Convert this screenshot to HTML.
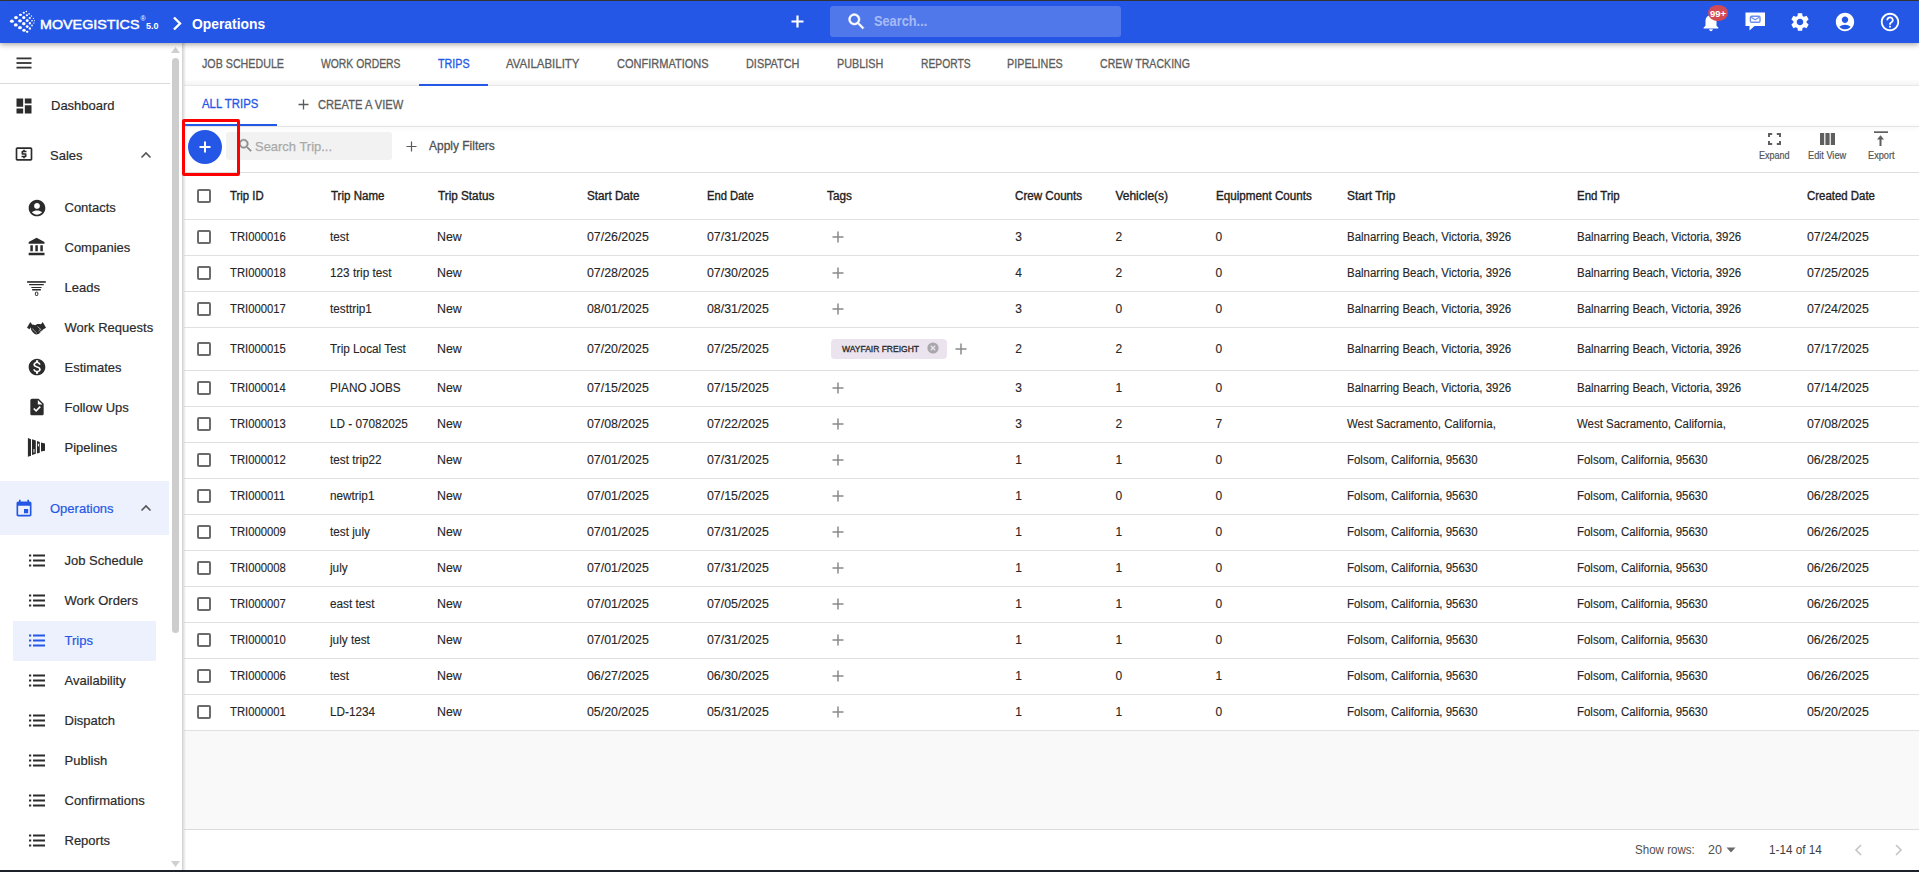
<!DOCTYPE html>
<html><head><meta charset="utf-8"><title>Trips - Operations</title>
<style>
html,body{margin:0;padding:0;width:1919px;height:872px;overflow:hidden;background:#fff;}
body{position:relative;font-family:"Liberation Sans",sans-serif;}
.t{position:absolute;white-space:nowrap;line-height:1;}
.r{position:absolute;display:block;}
</style></head><body>
<div class="r" style="left:0px;top:0px;width:1919px;height:872px;background:#ffffff;"></div>
<div class="r" style="left:184px;top:731px;width:1735px;height:98px;background:#f9f9f9;"></div>
<div class="r" style="left:184px;top:829px;width:1735px;height:1px;background:#dcdcdc;"></div>
<div class="r" style="left:184px;top:79px;width:1735px;height:6px;background:linear-gradient(to bottom, rgba(0,0,0,0), rgba(0,0,0,0.045));"></div>
<div class="r" style="left:184px;top:85px;width:1735px;height:1px;background:#e8e8e8;"></div>
<div class="t" style="left:202.00px;top:58px;font-size:12.5px;color:#5c5c5c;-webkit-text-stroke:0.3px #5c5c5c;transform:scaleX(0.8553);transform-origin:0 0;">JOB SCHEDULE</div>
<div class="t" style="left:320.80px;top:58px;font-size:12.5px;color:#5c5c5c;-webkit-text-stroke:0.3px #5c5c5c;transform:scaleX(0.8297);transform-origin:0 0;">WORK ORDERS</div>
<div class="t" style="left:437.50px;top:58px;font-size:12.5px;color:#2557e6;-webkit-text-stroke:0.3px #2557e6;transform:scaleX(0.8611);transform-origin:0 0;">TRIPS</div>
<div class="t" style="left:506.20px;top:58px;font-size:12.5px;color:#5c5c5c;-webkit-text-stroke:0.3px #5c5c5c;transform:scaleX(0.9173);transform-origin:0 0;">AVAILABILITY</div>
<div class="t" style="left:616.70px;top:58px;font-size:12.5px;color:#5c5c5c;-webkit-text-stroke:0.3px #5c5c5c;transform:scaleX(0.8813);transform-origin:0 0;">CONFIRMATIONS</div>
<div class="t" style="left:745.80px;top:58px;font-size:12.5px;color:#5c5c5c;-webkit-text-stroke:0.3px #5c5c5c;transform:scaleX(0.8701);transform-origin:0 0;">DISPATCH</div>
<div class="t" style="left:836.70px;top:58px;font-size:12.5px;color:#5c5c5c;-webkit-text-stroke:0.3px #5c5c5c;transform:scaleX(0.8654);transform-origin:0 0;">PUBLISH</div>
<div class="t" style="left:920.60px;top:58px;font-size:12.5px;color:#5c5c5c;-webkit-text-stroke:0.3px #5c5c5c;transform:scaleX(0.8258);transform-origin:0 0;">REPORTS</div>
<div class="t" style="left:1007.30px;top:58px;font-size:12.5px;color:#5c5c5c;-webkit-text-stroke:0.3px #5c5c5c;transform:scaleX(0.8634);transform-origin:0 0;">PIPELINES</div>
<div class="t" style="left:1100.30px;top:58px;font-size:12.5px;color:#5c5c5c;-webkit-text-stroke:0.3px #5c5c5c;transform:scaleX(0.8491);transform-origin:0 0;">CREW TRACKING</div>
<div class="r" style="left:419px;top:84px;width:69px;height:2px;background:#2557e6;"></div>
<div class="r" style="left:184px;top:126px;width:1735px;height:1px;background:#e4e4e4;box-shadow:0 1px 4px rgba(0,0,0,0.10)"></div>
<div class="t" style="left:202.00px;top:98px;font-size:12.5px;color:#2557e6;-webkit-text-stroke:0.3px #2557e6;transform:scaleX(0.9108);transform-origin:0 0;">ALL TRIPS</div>
<div class="t" style="left:318.00px;top:99px;font-size:12.5px;color:#5c5c5c;-webkit-text-stroke:0.3px #5c5c5c;transform:scaleX(0.8920);transform-origin:0 0;">CREATE A VIEW</div>
<svg class="r" style="left:298px;top:99px;" width="11" height="11" viewBox="0 0 11 11"><path d="M5.5 0.5v10M0.5 5.5h10" stroke="#5a5a5a" stroke-width="1.3"/></svg>
<div class="r" style="left:184px;top:124px;width:93px;height:2px;background:#2557e6;"></div>
<div class="r" style="left:184px;top:172px;width:1735px;height:1px;background:#dedede;"></div>
<div class="r" style="left:188px;top:130px;width:34px;height:34px;background:#2557e6;border-radius:50%"></div>
<svg class="r" style="left:197px;top:139px;" width="16" height="16" viewBox="0 0 16 16"><path d="M8 2.5v11M2.5 8h11" stroke="#fff" stroke-width="2"/></svg>
<div class="r" style="left:226px;top:132px;width:166px;height:28px;background:#f2f2f2;border-radius:3px"></div>
<svg class="r" style="left:237.3px;top:136.8px;" width="17" height="17" viewBox="0 0 24 24"><path fill="#8e8e8e" stroke="#8e8e8e" stroke-width="0.7" d="M15.5 14h-.79l-.28-.27C15.41 12.59 16 11.11 16 9.5 16 5.91 13.09 3 9.5 3S3 5.91 3 9.5 5.91 16 9.5 16c1.61 0 3.09-.59 4.23-1.57l.27.28v.79l5 4.99L20.49 19l-4.99-5zm-6 0C7.01 14 5 11.99 5 9.5S7.01 5 9.5 5 14 7.01 14 9.5 11.99 14 9.5 14z"/></svg>
<div class="t" style="left:255.00px;top:140px;font-size:13.5px;color:#a9a9a9;-webkit-text-stroke:0.25px #a9a9a9;transform:scaleX(0.9594);transform-origin:0 0;">Search Trip...</div>
<svg class="r" style="left:406px;top:141px;" width="11" height="11" viewBox="0 0 11 11"><path d="M5.5 0.5v10M0.5 5.5h10" stroke="#5a5a5a" stroke-width="1.2"/></svg>
<div class="t" style="left:428.90px;top:139px;font-size:13px;color:#505050;-webkit-text-stroke:0.3px #505050;transform:scaleX(0.9203);transform-origin:0 0;">Apply Filters</div>
<div class="r" style="left:182px;top:119px;width:58px;height:57px;background:transparent;border:3px solid #ff0000;box-sizing:border-box;border-radius:2px;z-index:10"></div>
<svg class="r" style="left:1760px;top:125px" width="140" height="26" viewBox="1760 125 140 26"><g fill="none" stroke="#5f5f5f" stroke-width="2"><path d="M1769 137v-3h3.2M1776.8 134h3.2v3M1780 141v3h-3.2M1772.2 144h-3.2v-3"/></g><g fill="#5f5f5f"><rect x="1820" y="133" width="4.2" height="12"/><rect x="1825.4" y="133" width="4.2" height="12"/><rect x="1830.8" y="133" width="4.2" height="12"/><rect x="1874" y="131.3" width="14" height="1.7"/><path d="M1877 139.4l3.5-4.2 3.5 4.2h-2.5v6.6h-2v-6.6z"/></g></svg>
<div class="t" style="left:1758.70px;top:151px;font-size:10px;color:#555;-webkit-text-stroke:0.2px #555;transform:scaleX(0.9027);transform-origin:0 0;">Expand</div>
<div class="t" style="left:1808.30px;top:151px;font-size:10px;color:#555;-webkit-text-stroke:0.2px #555;transform:scaleX(0.9194);transform-origin:0 0;">Edit View</div>
<div class="t" style="left:1867.50px;top:151px;font-size:10px;color:#555;-webkit-text-stroke:0.2px #555;transform:scaleX(0.9204);transform-origin:0 0;">Export</div>
<div class="r" style="left:184px;top:219px;width:1735px;height:1px;background:#e0e0e0;"></div>
<div class="r" style="left:197px;top:189px;width:14px;height:14px;background:transparent;border:2px solid #6b6b6b;border-radius:2px;box-sizing:border-box"></div>
<div class="t" style="left:230.40px;top:190px;font-size:12px;color:#212121;-webkit-text-stroke:0.35px #212121;transform:scaleX(0.9444);transform-origin:0 0;">Trip ID</div>
<div class="t" style="left:330.60px;top:190px;font-size:12px;color:#212121;-webkit-text-stroke:0.35px #212121;transform:scaleX(0.9611);transform-origin:0 0;">Trip Name</div>
<div class="t" style="left:437.60px;top:190px;font-size:12px;color:#212121;-webkit-text-stroke:0.35px #212121;transform:scaleX(0.9774);transform-origin:0 0;">Trip Status</div>
<div class="t" style="left:587.20px;top:190px;font-size:12px;color:#212121;-webkit-text-stroke:0.35px #212121;transform:scaleX(0.9722);transform-origin:0 0;">Start Date</div>
<div class="t" style="left:706.70px;top:190px;font-size:12px;color:#212121;-webkit-text-stroke:0.35px #212121;transform:scaleX(0.9313);transform-origin:0 0;">End Date</div>
<div class="t" style="left:827.10px;top:190px;font-size:12px;color:#212121;-webkit-text-stroke:0.35px #212121;transform:scaleX(0.9795);transform-origin:0 0;">Tags</div>
<div class="t" style="left:1015.30px;top:190px;font-size:12px;color:#212121;-webkit-text-stroke:0.35px #212121;transform:scaleX(0.9674);transform-origin:0 0;">Crew Counts</div>
<div class="t" style="left:1115.40px;top:190px;font-size:12px;color:#212121;-webkit-text-stroke:0.35px #212121;">Vehicle(s)</div>
<div class="t" style="left:1215.50px;top:190px;font-size:12px;color:#212121;-webkit-text-stroke:0.35px #212121;transform:scaleX(0.9706);transform-origin:0 0;">Equipment Counts</div>
<div class="t" style="left:1346.70px;top:190px;font-size:12px;color:#212121;-webkit-text-stroke:0.35px #212121;transform:scaleX(0.9926);transform-origin:0 0;">Start Trip</div>
<div class="t" style="left:1576.60px;top:190px;font-size:12px;color:#212121;-webkit-text-stroke:0.35px #212121;transform:scaleX(0.9553);transform-origin:0 0;">End Trip</div>
<div class="t" style="left:1806.50px;top:190px;font-size:12px;color:#212121;-webkit-text-stroke:0.35px #212121;transform:scaleX(0.9524);transform-origin:0 0;">Created Date</div>
<div class="r" style="left:197px;top:230px;width:14px;height:14px;background:transparent;border:2px solid #6b6b6b;border-radius:2px;box-sizing:border-box"></div>
<div class="t" style="left:230.40px;top:231px;font-size:12px;color:#262626;-webkit-text-stroke:0.12px #262626;transform:scaleX(0.9400);transform-origin:0 0;">TRI000016</div>
<div class="t" style="left:330.20px;top:231px;font-size:12px;color:#262626;-webkit-text-stroke:0.12px #262626;transform:scaleX(0.9800);transform-origin:0 0;">test</div>
<div class="t" style="left:437.40px;top:231px;font-size:12px;color:#262626;-webkit-text-stroke:0.12px #262626;transform:scaleX(1.0300);transform-origin:0 0;">New</div>
<div class="t" style="left:587.40px;top:231px;font-size:12px;color:#262626;-webkit-text-stroke:0.12px #262626;transform:scaleX(1.0300);transform-origin:0 0;">07/26/2025</div>
<div class="t" style="left:706.80px;top:231px;font-size:12px;color:#262626;-webkit-text-stroke:0.12px #262626;transform:scaleX(1.0300);transform-origin:0 0;">07/31/2025</div>
<svg class="r" style="left:832px;top:231px;" width="12" height="12" viewBox="0 0 12 12"><path d="M6 0.5v11M0.5 6h11" stroke="#8a8a8a" stroke-width="1.5"/></svg>
<div class="t" style="left:1015.30px;top:231px;font-size:12px;color:#262626;-webkit-text-stroke:0.12px #262626;">3</div>
<div class="t" style="left:1115.40px;top:231px;font-size:12px;color:#262626;-webkit-text-stroke:0.12px #262626;">2</div>
<div class="t" style="left:1215.50px;top:231px;font-size:12px;color:#262626;-webkit-text-stroke:0.12px #262626;">0</div>
<div class="t" style="left:1346.70px;top:231px;font-size:12px;color:#262626;-webkit-text-stroke:0.12px #262626;transform:scaleX(0.9550);transform-origin:0 0;">Balnarring Beach, Victoria, 3926</div>
<div class="t" style="left:1576.60px;top:231px;font-size:12px;color:#262626;-webkit-text-stroke:0.12px #262626;transform:scaleX(0.9550);transform-origin:0 0;">Balnarring Beach, Victoria, 3926</div>
<div class="t" style="left:1806.50px;top:231px;font-size:12px;color:#262626;-webkit-text-stroke:0.12px #262626;transform:scaleX(1.0300);transform-origin:0 0;">07/24/2025</div>
<div class="r" style="left:184px;top:255px;width:1735px;height:1px;background:#e0e0e0;"></div>
<div class="r" style="left:197px;top:266px;width:14px;height:14px;background:transparent;border:2px solid #6b6b6b;border-radius:2px;box-sizing:border-box"></div>
<div class="t" style="left:230.40px;top:267px;font-size:12px;color:#262626;-webkit-text-stroke:0.12px #262626;transform:scaleX(0.9400);transform-origin:0 0;">TRI000018</div>
<div class="t" style="left:330.20px;top:267px;font-size:12px;color:#262626;-webkit-text-stroke:0.12px #262626;transform:scaleX(0.9800);transform-origin:0 0;">123 trip test</div>
<div class="t" style="left:437.40px;top:267px;font-size:12px;color:#262626;-webkit-text-stroke:0.12px #262626;transform:scaleX(1.0300);transform-origin:0 0;">New</div>
<div class="t" style="left:587.40px;top:267px;font-size:12px;color:#262626;-webkit-text-stroke:0.12px #262626;transform:scaleX(1.0300);transform-origin:0 0;">07/28/2025</div>
<div class="t" style="left:706.80px;top:267px;font-size:12px;color:#262626;-webkit-text-stroke:0.12px #262626;transform:scaleX(1.0300);transform-origin:0 0;">07/30/2025</div>
<svg class="r" style="left:832px;top:267px;" width="12" height="12" viewBox="0 0 12 12"><path d="M6 0.5v11M0.5 6h11" stroke="#8a8a8a" stroke-width="1.5"/></svg>
<div class="t" style="left:1015.30px;top:267px;font-size:12px;color:#262626;-webkit-text-stroke:0.12px #262626;">4</div>
<div class="t" style="left:1115.40px;top:267px;font-size:12px;color:#262626;-webkit-text-stroke:0.12px #262626;">2</div>
<div class="t" style="left:1215.50px;top:267px;font-size:12px;color:#262626;-webkit-text-stroke:0.12px #262626;">0</div>
<div class="t" style="left:1346.70px;top:267px;font-size:12px;color:#262626;-webkit-text-stroke:0.12px #262626;transform:scaleX(0.9550);transform-origin:0 0;">Balnarring Beach, Victoria, 3926</div>
<div class="t" style="left:1576.60px;top:267px;font-size:12px;color:#262626;-webkit-text-stroke:0.12px #262626;transform:scaleX(0.9550);transform-origin:0 0;">Balnarring Beach, Victoria, 3926</div>
<div class="t" style="left:1806.50px;top:267px;font-size:12px;color:#262626;-webkit-text-stroke:0.12px #262626;transform:scaleX(1.0300);transform-origin:0 0;">07/25/2025</div>
<div class="r" style="left:184px;top:291px;width:1735px;height:1px;background:#e0e0e0;"></div>
<div class="r" style="left:197px;top:302px;width:14px;height:14px;background:transparent;border:2px solid #6b6b6b;border-radius:2px;box-sizing:border-box"></div>
<div class="t" style="left:230.40px;top:303px;font-size:12px;color:#262626;-webkit-text-stroke:0.12px #262626;transform:scaleX(0.9400);transform-origin:0 0;">TRI000017</div>
<div class="t" style="left:330.20px;top:303px;font-size:12px;color:#262626;-webkit-text-stroke:0.12px #262626;transform:scaleX(0.9800);transform-origin:0 0;">testtrip1</div>
<div class="t" style="left:437.40px;top:303px;font-size:12px;color:#262626;-webkit-text-stroke:0.12px #262626;transform:scaleX(1.0300);transform-origin:0 0;">New</div>
<div class="t" style="left:587.40px;top:303px;font-size:12px;color:#262626;-webkit-text-stroke:0.12px #262626;transform:scaleX(1.0300);transform-origin:0 0;">08/01/2025</div>
<div class="t" style="left:706.80px;top:303px;font-size:12px;color:#262626;-webkit-text-stroke:0.12px #262626;transform:scaleX(1.0300);transform-origin:0 0;">08/31/2025</div>
<svg class="r" style="left:832px;top:303px;" width="12" height="12" viewBox="0 0 12 12"><path d="M6 0.5v11M0.5 6h11" stroke="#8a8a8a" stroke-width="1.5"/></svg>
<div class="t" style="left:1015.30px;top:303px;font-size:12px;color:#262626;-webkit-text-stroke:0.12px #262626;">3</div>
<div class="t" style="left:1115.40px;top:303px;font-size:12px;color:#262626;-webkit-text-stroke:0.12px #262626;">0</div>
<div class="t" style="left:1215.50px;top:303px;font-size:12px;color:#262626;-webkit-text-stroke:0.12px #262626;">0</div>
<div class="t" style="left:1346.70px;top:303px;font-size:12px;color:#262626;-webkit-text-stroke:0.12px #262626;transform:scaleX(0.9550);transform-origin:0 0;">Balnarring Beach, Victoria, 3926</div>
<div class="t" style="left:1576.60px;top:303px;font-size:12px;color:#262626;-webkit-text-stroke:0.12px #262626;transform:scaleX(0.9550);transform-origin:0 0;">Balnarring Beach, Victoria, 3926</div>
<div class="t" style="left:1806.50px;top:303px;font-size:12px;color:#262626;-webkit-text-stroke:0.12px #262626;transform:scaleX(1.0300);transform-origin:0 0;">07/24/2025</div>
<div class="r" style="left:184px;top:327px;width:1735px;height:1px;background:#e0e0e0;"></div>
<div class="r" style="left:197px;top:342px;width:14px;height:14px;background:transparent;border:2px solid #6b6b6b;border-radius:2px;box-sizing:border-box"></div>
<div class="t" style="left:230.40px;top:343px;font-size:12px;color:#262626;-webkit-text-stroke:0.12px #262626;transform:scaleX(0.9400);transform-origin:0 0;">TRI000015</div>
<div class="t" style="left:330.20px;top:343px;font-size:12px;color:#262626;-webkit-text-stroke:0.12px #262626;transform:scaleX(0.9800);transform-origin:0 0;">Trip Local Test</div>
<div class="t" style="left:437.40px;top:343px;font-size:12px;color:#262626;-webkit-text-stroke:0.12px #262626;transform:scaleX(1.0300);transform-origin:0 0;">New</div>
<div class="t" style="left:587.40px;top:343px;font-size:12px;color:#262626;-webkit-text-stroke:0.12px #262626;transform:scaleX(1.0300);transform-origin:0 0;">07/20/2025</div>
<div class="t" style="left:706.80px;top:343px;font-size:12px;color:#262626;-webkit-text-stroke:0.12px #262626;transform:scaleX(1.0300);transform-origin:0 0;">07/25/2025</div>
<div class="r" style="left:831px;top:339px;width:116px;height:20px;background:#ebe3ed;border-radius:4px"></div>
<div class="t" style="left:841.70px;top:344px;font-size:9.8px;color:#2a2a2a;-webkit-text-stroke:0.35px #2a2a2a;transform:scaleX(0.8677);transform-origin:0 0;">WAYFAIR FREIGHT</div>
<svg class="r" style="left:927px;top:342px;" width="12" height="12" viewBox="0 0 12 12"><circle cx="6" cy="6" r="5.6" fill="#a9a6ab"/><path d="M3.8 3.8l4.4 4.4M8.2 3.8l-4.4 4.4" stroke="#ebe3ed" stroke-width="1.3"/></svg>
<svg class="r" style="left:955px;top:343px;" width="12" height="12" viewBox="0 0 12 12"><path d="M6 0.5v11M0.5 6h11" stroke="#8a8a8a" stroke-width="1.5"/></svg>
<div class="t" style="left:1015.30px;top:343px;font-size:12px;color:#262626;-webkit-text-stroke:0.12px #262626;">2</div>
<div class="t" style="left:1115.40px;top:343px;font-size:12px;color:#262626;-webkit-text-stroke:0.12px #262626;">2</div>
<div class="t" style="left:1215.50px;top:343px;font-size:12px;color:#262626;-webkit-text-stroke:0.12px #262626;">0</div>
<div class="t" style="left:1346.70px;top:343px;font-size:12px;color:#262626;-webkit-text-stroke:0.12px #262626;transform:scaleX(0.9550);transform-origin:0 0;">Balnarring Beach, Victoria, 3926</div>
<div class="t" style="left:1576.60px;top:343px;font-size:12px;color:#262626;-webkit-text-stroke:0.12px #262626;transform:scaleX(0.9550);transform-origin:0 0;">Balnarring Beach, Victoria, 3926</div>
<div class="t" style="left:1806.50px;top:343px;font-size:12px;color:#262626;-webkit-text-stroke:0.12px #262626;transform:scaleX(1.0300);transform-origin:0 0;">07/17/2025</div>
<div class="r" style="left:184px;top:370px;width:1735px;height:1px;background:#e0e0e0;"></div>
<div class="r" style="left:197px;top:381px;width:14px;height:14px;background:transparent;border:2px solid #6b6b6b;border-radius:2px;box-sizing:border-box"></div>
<div class="t" style="left:230.40px;top:382px;font-size:12px;color:#262626;-webkit-text-stroke:0.12px #262626;transform:scaleX(0.9400);transform-origin:0 0;">TRI000014</div>
<div class="t" style="left:330.20px;top:382px;font-size:12px;color:#262626;-webkit-text-stroke:0.12px #262626;transform:scaleX(0.9800);transform-origin:0 0;">PIANO JOBS</div>
<div class="t" style="left:437.40px;top:382px;font-size:12px;color:#262626;-webkit-text-stroke:0.12px #262626;transform:scaleX(1.0300);transform-origin:0 0;">New</div>
<div class="t" style="left:587.40px;top:382px;font-size:12px;color:#262626;-webkit-text-stroke:0.12px #262626;transform:scaleX(1.0300);transform-origin:0 0;">07/15/2025</div>
<div class="t" style="left:706.80px;top:382px;font-size:12px;color:#262626;-webkit-text-stroke:0.12px #262626;transform:scaleX(1.0300);transform-origin:0 0;">07/15/2025</div>
<svg class="r" style="left:832px;top:382px;" width="12" height="12" viewBox="0 0 12 12"><path d="M6 0.5v11M0.5 6h11" stroke="#8a8a8a" stroke-width="1.5"/></svg>
<div class="t" style="left:1015.30px;top:382px;font-size:12px;color:#262626;-webkit-text-stroke:0.12px #262626;">3</div>
<div class="t" style="left:1115.40px;top:382px;font-size:12px;color:#262626;-webkit-text-stroke:0.12px #262626;">1</div>
<div class="t" style="left:1215.50px;top:382px;font-size:12px;color:#262626;-webkit-text-stroke:0.12px #262626;">0</div>
<div class="t" style="left:1346.70px;top:382px;font-size:12px;color:#262626;-webkit-text-stroke:0.12px #262626;transform:scaleX(0.9550);transform-origin:0 0;">Balnarring Beach, Victoria, 3926</div>
<div class="t" style="left:1576.60px;top:382px;font-size:12px;color:#262626;-webkit-text-stroke:0.12px #262626;transform:scaleX(0.9550);transform-origin:0 0;">Balnarring Beach, Victoria, 3926</div>
<div class="t" style="left:1806.50px;top:382px;font-size:12px;color:#262626;-webkit-text-stroke:0.12px #262626;transform:scaleX(1.0300);transform-origin:0 0;">07/14/2025</div>
<div class="r" style="left:184px;top:406px;width:1735px;height:1px;background:#e0e0e0;"></div>
<div class="r" style="left:197px;top:417px;width:14px;height:14px;background:transparent;border:2px solid #6b6b6b;border-radius:2px;box-sizing:border-box"></div>
<div class="t" style="left:230.40px;top:418px;font-size:12px;color:#262626;-webkit-text-stroke:0.12px #262626;transform:scaleX(0.9400);transform-origin:0 0;">TRI000013</div>
<div class="t" style="left:330.20px;top:418px;font-size:12px;color:#262626;-webkit-text-stroke:0.12px #262626;transform:scaleX(0.9800);transform-origin:0 0;">LD - 07082025</div>
<div class="t" style="left:437.40px;top:418px;font-size:12px;color:#262626;-webkit-text-stroke:0.12px #262626;transform:scaleX(1.0300);transform-origin:0 0;">New</div>
<div class="t" style="left:587.40px;top:418px;font-size:12px;color:#262626;-webkit-text-stroke:0.12px #262626;transform:scaleX(1.0300);transform-origin:0 0;">07/08/2025</div>
<div class="t" style="left:706.80px;top:418px;font-size:12px;color:#262626;-webkit-text-stroke:0.12px #262626;transform:scaleX(1.0300);transform-origin:0 0;">07/22/2025</div>
<svg class="r" style="left:832px;top:418px;" width="12" height="12" viewBox="0 0 12 12"><path d="M6 0.5v11M0.5 6h11" stroke="#8a8a8a" stroke-width="1.5"/></svg>
<div class="t" style="left:1015.30px;top:418px;font-size:12px;color:#262626;-webkit-text-stroke:0.12px #262626;">3</div>
<div class="t" style="left:1115.40px;top:418px;font-size:12px;color:#262626;-webkit-text-stroke:0.12px #262626;">2</div>
<div class="t" style="left:1215.50px;top:418px;font-size:12px;color:#262626;-webkit-text-stroke:0.12px #262626;">7</div>
<div class="t" style="left:1346.70px;top:418px;font-size:12px;color:#262626;-webkit-text-stroke:0.12px #262626;transform:scaleX(0.9550);transform-origin:0 0;">West Sacramento, California,</div>
<div class="t" style="left:1576.60px;top:418px;font-size:12px;color:#262626;-webkit-text-stroke:0.12px #262626;transform:scaleX(0.9550);transform-origin:0 0;">West Sacramento, California,</div>
<div class="t" style="left:1806.50px;top:418px;font-size:12px;color:#262626;-webkit-text-stroke:0.12px #262626;transform:scaleX(1.0300);transform-origin:0 0;">07/08/2025</div>
<div class="r" style="left:184px;top:442px;width:1735px;height:1px;background:#e0e0e0;"></div>
<div class="r" style="left:197px;top:453px;width:14px;height:14px;background:transparent;border:2px solid #6b6b6b;border-radius:2px;box-sizing:border-box"></div>
<div class="t" style="left:230.40px;top:454px;font-size:12px;color:#262626;-webkit-text-stroke:0.12px #262626;transform:scaleX(0.9400);transform-origin:0 0;">TRI000012</div>
<div class="t" style="left:330.20px;top:454px;font-size:12px;color:#262626;-webkit-text-stroke:0.12px #262626;transform:scaleX(0.9800);transform-origin:0 0;">test trip22</div>
<div class="t" style="left:437.40px;top:454px;font-size:12px;color:#262626;-webkit-text-stroke:0.12px #262626;transform:scaleX(1.0300);transform-origin:0 0;">New</div>
<div class="t" style="left:587.40px;top:454px;font-size:12px;color:#262626;-webkit-text-stroke:0.12px #262626;transform:scaleX(1.0300);transform-origin:0 0;">07/01/2025</div>
<div class="t" style="left:706.80px;top:454px;font-size:12px;color:#262626;-webkit-text-stroke:0.12px #262626;transform:scaleX(1.0300);transform-origin:0 0;">07/31/2025</div>
<svg class="r" style="left:832px;top:454px;" width="12" height="12" viewBox="0 0 12 12"><path d="M6 0.5v11M0.5 6h11" stroke="#8a8a8a" stroke-width="1.5"/></svg>
<div class="t" style="left:1015.30px;top:454px;font-size:12px;color:#262626;-webkit-text-stroke:0.12px #262626;">1</div>
<div class="t" style="left:1115.40px;top:454px;font-size:12px;color:#262626;-webkit-text-stroke:0.12px #262626;">1</div>
<div class="t" style="left:1215.50px;top:454px;font-size:12px;color:#262626;-webkit-text-stroke:0.12px #262626;">0</div>
<div class="t" style="left:1346.70px;top:454px;font-size:12px;color:#262626;-webkit-text-stroke:0.12px #262626;transform:scaleX(0.9550);transform-origin:0 0;">Folsom, California, 95630</div>
<div class="t" style="left:1576.60px;top:454px;font-size:12px;color:#262626;-webkit-text-stroke:0.12px #262626;transform:scaleX(0.9550);transform-origin:0 0;">Folsom, California, 95630</div>
<div class="t" style="left:1806.50px;top:454px;font-size:12px;color:#262626;-webkit-text-stroke:0.12px #262626;transform:scaleX(1.0300);transform-origin:0 0;">06/28/2025</div>
<div class="r" style="left:184px;top:478px;width:1735px;height:1px;background:#e0e0e0;"></div>
<div class="r" style="left:197px;top:489px;width:14px;height:14px;background:transparent;border:2px solid #6b6b6b;border-radius:2px;box-sizing:border-box"></div>
<div class="t" style="left:230.40px;top:490px;font-size:12px;color:#262626;-webkit-text-stroke:0.12px #262626;transform:scaleX(0.9400);transform-origin:0 0;">TRI000011</div>
<div class="t" style="left:330.20px;top:490px;font-size:12px;color:#262626;-webkit-text-stroke:0.12px #262626;transform:scaleX(0.9800);transform-origin:0 0;">newtrip1</div>
<div class="t" style="left:437.40px;top:490px;font-size:12px;color:#262626;-webkit-text-stroke:0.12px #262626;transform:scaleX(1.0300);transform-origin:0 0;">New</div>
<div class="t" style="left:587.40px;top:490px;font-size:12px;color:#262626;-webkit-text-stroke:0.12px #262626;transform:scaleX(1.0300);transform-origin:0 0;">07/01/2025</div>
<div class="t" style="left:706.80px;top:490px;font-size:12px;color:#262626;-webkit-text-stroke:0.12px #262626;transform:scaleX(1.0300);transform-origin:0 0;">07/15/2025</div>
<svg class="r" style="left:832px;top:490px;" width="12" height="12" viewBox="0 0 12 12"><path d="M6 0.5v11M0.5 6h11" stroke="#8a8a8a" stroke-width="1.5"/></svg>
<div class="t" style="left:1015.30px;top:490px;font-size:12px;color:#262626;-webkit-text-stroke:0.12px #262626;">1</div>
<div class="t" style="left:1115.40px;top:490px;font-size:12px;color:#262626;-webkit-text-stroke:0.12px #262626;">0</div>
<div class="t" style="left:1215.50px;top:490px;font-size:12px;color:#262626;-webkit-text-stroke:0.12px #262626;">0</div>
<div class="t" style="left:1346.70px;top:490px;font-size:12px;color:#262626;-webkit-text-stroke:0.12px #262626;transform:scaleX(0.9550);transform-origin:0 0;">Folsom, California, 95630</div>
<div class="t" style="left:1576.60px;top:490px;font-size:12px;color:#262626;-webkit-text-stroke:0.12px #262626;transform:scaleX(0.9550);transform-origin:0 0;">Folsom, California, 95630</div>
<div class="t" style="left:1806.50px;top:490px;font-size:12px;color:#262626;-webkit-text-stroke:0.12px #262626;transform:scaleX(1.0300);transform-origin:0 0;">06/28/2025</div>
<div class="r" style="left:184px;top:514px;width:1735px;height:1px;background:#e0e0e0;"></div>
<div class="r" style="left:197px;top:525px;width:14px;height:14px;background:transparent;border:2px solid #6b6b6b;border-radius:2px;box-sizing:border-box"></div>
<div class="t" style="left:230.40px;top:526px;font-size:12px;color:#262626;-webkit-text-stroke:0.12px #262626;transform:scaleX(0.9400);transform-origin:0 0;">TRI000009</div>
<div class="t" style="left:330.20px;top:526px;font-size:12px;color:#262626;-webkit-text-stroke:0.12px #262626;transform:scaleX(0.9800);transform-origin:0 0;">test july</div>
<div class="t" style="left:437.40px;top:526px;font-size:12px;color:#262626;-webkit-text-stroke:0.12px #262626;transform:scaleX(1.0300);transform-origin:0 0;">New</div>
<div class="t" style="left:587.40px;top:526px;font-size:12px;color:#262626;-webkit-text-stroke:0.12px #262626;transform:scaleX(1.0300);transform-origin:0 0;">07/01/2025</div>
<div class="t" style="left:706.80px;top:526px;font-size:12px;color:#262626;-webkit-text-stroke:0.12px #262626;transform:scaleX(1.0300);transform-origin:0 0;">07/31/2025</div>
<svg class="r" style="left:832px;top:526px;" width="12" height="12" viewBox="0 0 12 12"><path d="M6 0.5v11M0.5 6h11" stroke="#8a8a8a" stroke-width="1.5"/></svg>
<div class="t" style="left:1015.30px;top:526px;font-size:12px;color:#262626;-webkit-text-stroke:0.12px #262626;">1</div>
<div class="t" style="left:1115.40px;top:526px;font-size:12px;color:#262626;-webkit-text-stroke:0.12px #262626;">1</div>
<div class="t" style="left:1215.50px;top:526px;font-size:12px;color:#262626;-webkit-text-stroke:0.12px #262626;">0</div>
<div class="t" style="left:1346.70px;top:526px;font-size:12px;color:#262626;-webkit-text-stroke:0.12px #262626;transform:scaleX(0.9550);transform-origin:0 0;">Folsom, California, 95630</div>
<div class="t" style="left:1576.60px;top:526px;font-size:12px;color:#262626;-webkit-text-stroke:0.12px #262626;transform:scaleX(0.9550);transform-origin:0 0;">Folsom, California, 95630</div>
<div class="t" style="left:1806.50px;top:526px;font-size:12px;color:#262626;-webkit-text-stroke:0.12px #262626;transform:scaleX(1.0300);transform-origin:0 0;">06/26/2025</div>
<div class="r" style="left:184px;top:550px;width:1735px;height:1px;background:#e0e0e0;"></div>
<div class="r" style="left:197px;top:561px;width:14px;height:14px;background:transparent;border:2px solid #6b6b6b;border-radius:2px;box-sizing:border-box"></div>
<div class="t" style="left:230.40px;top:562px;font-size:12px;color:#262626;-webkit-text-stroke:0.12px #262626;transform:scaleX(0.9400);transform-origin:0 0;">TRI000008</div>
<div class="t" style="left:330.49px;top:562px;font-size:12px;color:#262626;-webkit-text-stroke:0.12px #262626;transform:scaleX(0.9800);transform-origin:0 0;">july</div>
<div class="t" style="left:437.40px;top:562px;font-size:12px;color:#262626;-webkit-text-stroke:0.12px #262626;transform:scaleX(1.0300);transform-origin:0 0;">New</div>
<div class="t" style="left:587.40px;top:562px;font-size:12px;color:#262626;-webkit-text-stroke:0.12px #262626;transform:scaleX(1.0300);transform-origin:0 0;">07/01/2025</div>
<div class="t" style="left:706.80px;top:562px;font-size:12px;color:#262626;-webkit-text-stroke:0.12px #262626;transform:scaleX(1.0300);transform-origin:0 0;">07/31/2025</div>
<svg class="r" style="left:832px;top:562px;" width="12" height="12" viewBox="0 0 12 12"><path d="M6 0.5v11M0.5 6h11" stroke="#8a8a8a" stroke-width="1.5"/></svg>
<div class="t" style="left:1015.30px;top:562px;font-size:12px;color:#262626;-webkit-text-stroke:0.12px #262626;">1</div>
<div class="t" style="left:1115.40px;top:562px;font-size:12px;color:#262626;-webkit-text-stroke:0.12px #262626;">1</div>
<div class="t" style="left:1215.50px;top:562px;font-size:12px;color:#262626;-webkit-text-stroke:0.12px #262626;">0</div>
<div class="t" style="left:1346.70px;top:562px;font-size:12px;color:#262626;-webkit-text-stroke:0.12px #262626;transform:scaleX(0.9550);transform-origin:0 0;">Folsom, California, 95630</div>
<div class="t" style="left:1576.60px;top:562px;font-size:12px;color:#262626;-webkit-text-stroke:0.12px #262626;transform:scaleX(0.9550);transform-origin:0 0;">Folsom, California, 95630</div>
<div class="t" style="left:1806.50px;top:562px;font-size:12px;color:#262626;-webkit-text-stroke:0.12px #262626;transform:scaleX(1.0300);transform-origin:0 0;">06/26/2025</div>
<div class="r" style="left:184px;top:586px;width:1735px;height:1px;background:#e0e0e0;"></div>
<div class="r" style="left:197px;top:597px;width:14px;height:14px;background:transparent;border:2px solid #6b6b6b;border-radius:2px;box-sizing:border-box"></div>
<div class="t" style="left:230.40px;top:598px;font-size:12px;color:#262626;-webkit-text-stroke:0.12px #262626;transform:scaleX(0.9400);transform-origin:0 0;">TRI000007</div>
<div class="t" style="left:330.20px;top:598px;font-size:12px;color:#262626;-webkit-text-stroke:0.12px #262626;transform:scaleX(0.9800);transform-origin:0 0;">east test</div>
<div class="t" style="left:437.40px;top:598px;font-size:12px;color:#262626;-webkit-text-stroke:0.12px #262626;transform:scaleX(1.0300);transform-origin:0 0;">New</div>
<div class="t" style="left:587.40px;top:598px;font-size:12px;color:#262626;-webkit-text-stroke:0.12px #262626;transform:scaleX(1.0300);transform-origin:0 0;">07/01/2025</div>
<div class="t" style="left:706.80px;top:598px;font-size:12px;color:#262626;-webkit-text-stroke:0.12px #262626;transform:scaleX(1.0300);transform-origin:0 0;">07/05/2025</div>
<svg class="r" style="left:832px;top:598px;" width="12" height="12" viewBox="0 0 12 12"><path d="M6 0.5v11M0.5 6h11" stroke="#8a8a8a" stroke-width="1.5"/></svg>
<div class="t" style="left:1015.30px;top:598px;font-size:12px;color:#262626;-webkit-text-stroke:0.12px #262626;">1</div>
<div class="t" style="left:1115.40px;top:598px;font-size:12px;color:#262626;-webkit-text-stroke:0.12px #262626;">1</div>
<div class="t" style="left:1215.50px;top:598px;font-size:12px;color:#262626;-webkit-text-stroke:0.12px #262626;">0</div>
<div class="t" style="left:1346.70px;top:598px;font-size:12px;color:#262626;-webkit-text-stroke:0.12px #262626;transform:scaleX(0.9550);transform-origin:0 0;">Folsom, California, 95630</div>
<div class="t" style="left:1576.60px;top:598px;font-size:12px;color:#262626;-webkit-text-stroke:0.12px #262626;transform:scaleX(0.9550);transform-origin:0 0;">Folsom, California, 95630</div>
<div class="t" style="left:1806.50px;top:598px;font-size:12px;color:#262626;-webkit-text-stroke:0.12px #262626;transform:scaleX(1.0300);transform-origin:0 0;">06/26/2025</div>
<div class="r" style="left:184px;top:622px;width:1735px;height:1px;background:#e0e0e0;"></div>
<div class="r" style="left:197px;top:633px;width:14px;height:14px;background:transparent;border:2px solid #6b6b6b;border-radius:2px;box-sizing:border-box"></div>
<div class="t" style="left:230.40px;top:634px;font-size:12px;color:#262626;-webkit-text-stroke:0.12px #262626;transform:scaleX(0.9400);transform-origin:0 0;">TRI000010</div>
<div class="t" style="left:330.49px;top:634px;font-size:12px;color:#262626;-webkit-text-stroke:0.12px #262626;transform:scaleX(0.9800);transform-origin:0 0;">july test</div>
<div class="t" style="left:437.40px;top:634px;font-size:12px;color:#262626;-webkit-text-stroke:0.12px #262626;transform:scaleX(1.0300);transform-origin:0 0;">New</div>
<div class="t" style="left:587.40px;top:634px;font-size:12px;color:#262626;-webkit-text-stroke:0.12px #262626;transform:scaleX(1.0300);transform-origin:0 0;">07/01/2025</div>
<div class="t" style="left:706.80px;top:634px;font-size:12px;color:#262626;-webkit-text-stroke:0.12px #262626;transform:scaleX(1.0300);transform-origin:0 0;">07/31/2025</div>
<svg class="r" style="left:832px;top:634px;" width="12" height="12" viewBox="0 0 12 12"><path d="M6 0.5v11M0.5 6h11" stroke="#8a8a8a" stroke-width="1.5"/></svg>
<div class="t" style="left:1015.30px;top:634px;font-size:12px;color:#262626;-webkit-text-stroke:0.12px #262626;">1</div>
<div class="t" style="left:1115.40px;top:634px;font-size:12px;color:#262626;-webkit-text-stroke:0.12px #262626;">1</div>
<div class="t" style="left:1215.50px;top:634px;font-size:12px;color:#262626;-webkit-text-stroke:0.12px #262626;">0</div>
<div class="t" style="left:1346.70px;top:634px;font-size:12px;color:#262626;-webkit-text-stroke:0.12px #262626;transform:scaleX(0.9550);transform-origin:0 0;">Folsom, California, 95630</div>
<div class="t" style="left:1576.60px;top:634px;font-size:12px;color:#262626;-webkit-text-stroke:0.12px #262626;transform:scaleX(0.9550);transform-origin:0 0;">Folsom, California, 95630</div>
<div class="t" style="left:1806.50px;top:634px;font-size:12px;color:#262626;-webkit-text-stroke:0.12px #262626;transform:scaleX(1.0300);transform-origin:0 0;">06/26/2025</div>
<div class="r" style="left:184px;top:658px;width:1735px;height:1px;background:#e0e0e0;"></div>
<div class="r" style="left:197px;top:669px;width:14px;height:14px;background:transparent;border:2px solid #6b6b6b;border-radius:2px;box-sizing:border-box"></div>
<div class="t" style="left:230.40px;top:670px;font-size:12px;color:#262626;-webkit-text-stroke:0.12px #262626;transform:scaleX(0.9400);transform-origin:0 0;">TRI000006</div>
<div class="t" style="left:330.20px;top:670px;font-size:12px;color:#262626;-webkit-text-stroke:0.12px #262626;transform:scaleX(0.9800);transform-origin:0 0;">test</div>
<div class="t" style="left:437.40px;top:670px;font-size:12px;color:#262626;-webkit-text-stroke:0.12px #262626;transform:scaleX(1.0300);transform-origin:0 0;">New</div>
<div class="t" style="left:587.40px;top:670px;font-size:12px;color:#262626;-webkit-text-stroke:0.12px #262626;transform:scaleX(1.0300);transform-origin:0 0;">06/27/2025</div>
<div class="t" style="left:706.80px;top:670px;font-size:12px;color:#262626;-webkit-text-stroke:0.12px #262626;transform:scaleX(1.0300);transform-origin:0 0;">06/30/2025</div>
<svg class="r" style="left:832px;top:670px;" width="12" height="12" viewBox="0 0 12 12"><path d="M6 0.5v11M0.5 6h11" stroke="#8a8a8a" stroke-width="1.5"/></svg>
<div class="t" style="left:1015.30px;top:670px;font-size:12px;color:#262626;-webkit-text-stroke:0.12px #262626;">1</div>
<div class="t" style="left:1115.40px;top:670px;font-size:12px;color:#262626;-webkit-text-stroke:0.12px #262626;">0</div>
<div class="t" style="left:1215.50px;top:670px;font-size:12px;color:#262626;-webkit-text-stroke:0.12px #262626;">1</div>
<div class="t" style="left:1346.70px;top:670px;font-size:12px;color:#262626;-webkit-text-stroke:0.12px #262626;transform:scaleX(0.9550);transform-origin:0 0;">Folsom, California, 95630</div>
<div class="t" style="left:1576.60px;top:670px;font-size:12px;color:#262626;-webkit-text-stroke:0.12px #262626;transform:scaleX(0.9550);transform-origin:0 0;">Folsom, California, 95630</div>
<div class="t" style="left:1806.50px;top:670px;font-size:12px;color:#262626;-webkit-text-stroke:0.12px #262626;transform:scaleX(1.0300);transform-origin:0 0;">06/26/2025</div>
<div class="r" style="left:184px;top:694px;width:1735px;height:1px;background:#e0e0e0;"></div>
<div class="r" style="left:197px;top:705px;width:14px;height:14px;background:transparent;border:2px solid #6b6b6b;border-radius:2px;box-sizing:border-box"></div>
<div class="t" style="left:230.40px;top:706px;font-size:12px;color:#262626;-webkit-text-stroke:0.12px #262626;transform:scaleX(0.9400);transform-origin:0 0;">TRI000001</div>
<div class="t" style="left:330.20px;top:706px;font-size:12px;color:#262626;-webkit-text-stroke:0.12px #262626;transform:scaleX(0.9800);transform-origin:0 0;">LD-1234</div>
<div class="t" style="left:437.40px;top:706px;font-size:12px;color:#262626;-webkit-text-stroke:0.12px #262626;transform:scaleX(1.0300);transform-origin:0 0;">New</div>
<div class="t" style="left:587.40px;top:706px;font-size:12px;color:#262626;-webkit-text-stroke:0.12px #262626;transform:scaleX(1.0300);transform-origin:0 0;">05/20/2025</div>
<div class="t" style="left:706.80px;top:706px;font-size:12px;color:#262626;-webkit-text-stroke:0.12px #262626;transform:scaleX(1.0300);transform-origin:0 0;">05/31/2025</div>
<svg class="r" style="left:832px;top:706px;" width="12" height="12" viewBox="0 0 12 12"><path d="M6 0.5v11M0.5 6h11" stroke="#8a8a8a" stroke-width="1.5"/></svg>
<div class="t" style="left:1015.30px;top:706px;font-size:12px;color:#262626;-webkit-text-stroke:0.12px #262626;">1</div>
<div class="t" style="left:1115.40px;top:706px;font-size:12px;color:#262626;-webkit-text-stroke:0.12px #262626;">1</div>
<div class="t" style="left:1215.50px;top:706px;font-size:12px;color:#262626;-webkit-text-stroke:0.12px #262626;">0</div>
<div class="t" style="left:1346.70px;top:706px;font-size:12px;color:#262626;-webkit-text-stroke:0.12px #262626;transform:scaleX(0.9550);transform-origin:0 0;">Folsom, California, 95630</div>
<div class="t" style="left:1576.60px;top:706px;font-size:12px;color:#262626;-webkit-text-stroke:0.12px #262626;transform:scaleX(0.9550);transform-origin:0 0;">Folsom, California, 95630</div>
<div class="t" style="left:1806.50px;top:706px;font-size:12px;color:#262626;-webkit-text-stroke:0.12px #262626;transform:scaleX(1.0300);transform-origin:0 0;">05/20/2025</div>
<div class="r" style="left:184px;top:730px;width:1735px;height:1px;background:#e0e0e0;"></div>
<div class="t" style="left:1634.50px;top:844px;font-size:12.5px;color:#505050;transform:scaleX(0.9253);transform-origin:0 0;">Show rows:</div>
<div class="t" style="left:1708.00px;top:844px;font-size:12.5px;color:#505050;">20</div>
<svg class="r" style="left:1726px;top:847px;" width="10" height="6" viewBox="0 0 10 6"><path d="M0.5 0.5h9l-4.5 5z" fill="#6a6a6a"/></svg>
<div class="t" style="left:1768.50px;top:844px;font-size:12.5px;color:#404040;transform:scaleX(0.9358);transform-origin:0 0;">1-14 of 14</div>
<svg class="r" style="left:1853px;top:844px;" width="10" height="12" viewBox="0 0 10 12"><path d="M8 1L3 6l5 5" stroke="#c4c4c4" stroke-width="1.6" fill="none"/></svg>
<svg class="r" style="left:1894px;top:844px;" width="10" height="12" viewBox="0 0 10 12"><path d="M2 1l5 5-5 5" stroke="#c4c4c4" stroke-width="1.6" fill="none"/></svg>
<div class="r" style="left:0px;top:43px;width:182px;height:827px;background:#ffffff;"></div>
<div class="r" style="left:182px;top:43px;width:4px;height:827px;background:linear-gradient(to right, #cfcfcf, rgba(255,255,255,0));"></div>
<svg class="r" style="left:16px;top:57px;" width="16" height="12" viewBox="0 0 16 12"><g fill="#333"><rect x="0.5" y="0.5" width="15" height="1.8"/><rect x="0.5" y="5.1" width="15" height="1.8"/><rect x="0.5" y="9.7" width="15" height="1.8"/></g></svg>
<div class="r" style="left:0px;top:83px;width:170px;height:1px;background:#dadada;"></div>
<svg class="r" style="left:13.5px;top:95.5px;" width="20" height="20" viewBox="0 0 24 24"><path fill="#2b2b2b" d="M3 13h8V3H3v10zm0 8h8v-6H3v6zm10 0h8V11h-8v10zm0-18v6h8V3h-8z"/></svg>
<div class="t" style="left:51.00px;top:99px;font-size:13px;color:#2b2b2b;-webkit-text-stroke:0.2px #2b2b2b;">Dashboard</div>
<svg class="r" style="left:13.5px;top:143.5px;" width="20" height="20" viewBox="0 0 24 24"><path fill="#2b2b2b" d="M11 17h2v-1h1c.55 0 1-.45 1-1v-3c0-.55-.45-1-1-1h-3v-1h4V8h-2V7h-2v1h-1c-.55 0-1 .45-1 1v3c0 .55.45 1 1 1h3v1H9v2h2v1zm9-13H4c-1.11 0-1.99.89-1.99 2L2 18c0 1.11.89 2 2 2h16c1.11 0 2-.89 2-2V6c0-1.11-.89-2-2-2zm0 14H4V6h16v12z"/></svg>
<div class="t" style="left:50.00px;top:149px;font-size:13px;color:#2b2b2b;-webkit-text-stroke:0.2px #2b2b2b;">Sales</div>
<svg class="r" style="left:140px;top:150px;" width="12" height="9" viewBox="0 0 12 9"><path d="M1.5 7.5L6 3l4.5 4.5" stroke="#555" stroke-width="1.6" fill="none"/></svg>
<svg class="r" style="left:27.0px;top:197.5px;" width="20" height="20" viewBox="0 0 24 24"><path fill="#2b2b2b" d="M12 2C6.48 2 2 6.48 2 12s4.48 10 10 10 10-4.48 10-10S17.52 2 12 2zm0 4c1.93 0 3.5 1.57 3.5 3.5S13.93 13 12 13s-3.5-1.57-3.5-3.5S10.07 6 12 6zm0 14c-2.03 0-4.43-.82-6.14-2.88C7.55 15.8 9.68 15 12 15s4.45.8 6.14 2.12C16.43 19.18 14.03 20 12 20z"/></svg>
<div class="t" style="left:64.50px;top:201px;font-size:13px;color:#2b2b2b;-webkit-text-stroke:0.2px #2b2b2b;">Contacts</div>
<svg class="r" style="left:27.0px;top:237.3px;" width="20" height="20" viewBox="0 0 24 24"><path fill="#2b2b2b" d="M4 10v7h3v-7H4zm6 0v7h3v-7h-3zM2 22h19v-3H2v3zm14-12v7h3v-7h-3zm-4.5-9L2 6v2h19V6l-9.5-5z"/></svg>
<div class="t" style="left:64.50px;top:241px;font-size:13px;color:#2b2b2b;-webkit-text-stroke:0.2px #2b2b2b;">Companies</div>
<svg class="r" style="left:22px;top:272.0px" width="30" height="24" viewBox="22 272.0 30 24"><g transform="translate(0 0.0)" fill="#2b2b2b"><rect x="27.1" y="281" width="18.7" height="1.9" fill="#4a4a4a"/><rect x="29" y="284" width="14.9" height="1.3" rx=".6"/><rect x="31.2" y="286.9" width="10.5" height="1.2" rx=".6"/><rect x="32" y="289.1" width="9" height="1.3" rx=".6"/><rect x="35.4" y="292.1" width="2.4" height="3.4" rx=".8" fill="none" stroke="#2b2b2b" stroke-width="1"/></g></svg>
<div class="t" style="left:64.50px;top:281px;font-size:13px;color:#2b2b2b;-webkit-text-stroke:0.2px #2b2b2b;">Leads</div>
<svg class="r" style="left:22px;top:316.8px" width="30" height="20" viewBox="22 316.8 30 20"><g transform="translate(0 -0.19999999999998863)" fill="#2b2b2b"><path d="M27 327.8l3.3-5.9 2.2 3.2-3 4.2z"/><path d="M46 327.8l-3.3-5.9-2.2 3.2 3 4.2z"/><path d="M30.5 326l2.5-1.5 2 .8 2.5-1.2 2.8-.1 2 1.6 1.6 2.8-1.4 1.8-3.5 3.6-2.4 .6-1.8-.3-2-1.8-1.6-2.2z"/></g><g transform="translate(0 -0.19999999999998863)" stroke="#fff" stroke-width=".6" fill="none"><path d="M32.2 328.5l1.5 1.5M33.8 330.2l1.5 1.5M35.4 331.8l1.4 1.4M37.5 326.5l3.8 3.4M38.6 331l1.8-1.6M39.7 332.4l1.7-1.5"/></g></svg>
<div class="t" style="left:64.50px;top:321px;font-size:13px;color:#2b2b2b;-webkit-text-stroke:0.2px #2b2b2b;">Work Requests</div>
<svg class="r" style="left:27.0px;top:357.3px;" width="20" height="20" viewBox="0 0 24 24"><path fill="#2b2b2b" d="M12 2C6.48 2 2 6.48 2 12s4.48 10 10 10 10-4.48 10-10S17.52 2 12 2zm1.41 16.09V20h-2.67v-1.93c-1.71-.36-3.16-1.46-3.27-3.4h1.96c.1 1.05.82 1.87 2.65 1.87 1.96 0 2.4-.98 2.4-1.59 0-.83-.44-1.61-2.67-2.14-2.48-.6-4.18-1.62-4.18-3.67 0-1.72 1.39-2.840 3.11-3.21V4h2.67v1.95c1.86.45 2.79 1.86 2.85 3.39H14.3c-.05-1.11-.64-1.87-2.22-1.87-1.5 0-2.4.68-2.4 1.64 0 .84.65 1.39 2.67 1.91s4.18 1.39 4.18 3.91c-.01 1.83-1.38 2.83-3.12 3.16z"/></svg>
<div class="t" style="left:64.50px;top:361px;font-size:13px;color:#2b2b2b;-webkit-text-stroke:0.2px #2b2b2b;">Estimates</div>
<svg class="r" style="left:27.0px;top:397.2px;" width="20" height="20" viewBox="0 0 24 24"><path fill="#2b2b2b" d="M14 2H6c-1.1 0-1.99.9-1.99 2L4 20c0 1.1.89 2 1.99 2H18c1.1 0 2-.9 2-2V8l-6-6zm-3.06 16L7.4 14.46l1.41-1.41 2.12 2.12 4.24-4.24 1.41 1.41L10.94 18zM13 9V3.5L18.5 9H13z"/></svg>
<div class="t" style="left:64.50px;top:401px;font-size:13px;color:#2b2b2b;-webkit-text-stroke:0.2px #2b2b2b;">Follow Ups</div>
<svg class="r" style="left:22px;top:427.6px" width="30" height="30" viewBox="22 427.6 30 30"><g transform="translate(0 -1.3999999999999773)" fill="#2b2b2b"><path d="M27.9 439l3.1 1.3v16.4l-3.1 1.1z"/><path d="M32 440.3l3.8 1.2v13.3l-3.8 1.1z"/><path d="M37 442l2.8 .9v10.9l-2.8 .8z"/><path d="M41 443.5l4 1v7.2l-4 .9z"/><rect x="33" y="450" width="1.8" height="3.5" fill="#999"/><ellipse cx="38.4" cy="446" rx=".6" ry="1.6" fill="#fff"/></g></svg>
<div class="t" style="left:64.50px;top:441px;font-size:13px;color:#2b2b2b;-webkit-text-stroke:0.2px #2b2b2b;">Pipelines</div>
<div class="r" style="left:0px;top:481px;width:169px;height:54px;background:#edf1fd;"></div>
<svg class="r" style="left:13.5px;top:499px;" width="20" height="20" viewBox="0 0 24 24"><path fill="#2557e6" d="M17 12h-5v5h5v-5zM16 1v2H8V1H6v2H5c-1.11 0-1.99.9-1.99 2L3 19c0 1.1.89 2 2 2h14c1.1 0 2-.9 2-2V5c0-1.1-.9-2-2-2h-1V1h-2zm3 18H5V8h14v11z"/></svg>
<div class="t" style="left:50.00px;top:502px;font-size:13px;color:#2557e6;-webkit-text-stroke:0.2px #2557e6;">Operations</div>
<svg class="r" style="left:140px;top:503px;" width="12" height="9" viewBox="0 0 12 9"><path d="M1.5 7.5L6 3l4.5 4.5" stroke="#555" stroke-width="1.6" fill="none"/></svg>
<div class="r" style="left:13px;top:621px;width:143px;height:40px;background:#edf1fd;"></div>
<svg class="r" style="left:29px;top:554.2px;" width="16" height="13" viewBox="0 0 16 13"><g fill="#2b2b2b"><rect x="0" y="0.5" width="2.2" height="2"/><rect x="0" y="5.5" width="2.2" height="2"/><rect x="0" y="10.5" width="2.2" height="2"/><rect x="4" y="0.5" width="12" height="2"/><rect x="4" y="5.5" width="12" height="2"/><rect x="4" y="10.5" width="12" height="2"/></g></svg>
<div class="t" style="left:64.50px;top:554px;font-size:13px;color:#2b2b2b;-webkit-text-stroke:0.2px #2b2b2b;">Job Schedule</div>
<svg class="r" style="left:29px;top:594.2px;" width="16" height="13" viewBox="0 0 16 13"><g fill="#2b2b2b"><rect x="0" y="0.5" width="2.2" height="2"/><rect x="0" y="5.5" width="2.2" height="2"/><rect x="0" y="10.5" width="2.2" height="2"/><rect x="4" y="0.5" width="12" height="2"/><rect x="4" y="5.5" width="12" height="2"/><rect x="4" y="10.5" width="12" height="2"/></g></svg>
<div class="t" style="left:64.50px;top:594px;font-size:13px;color:#2b2b2b;-webkit-text-stroke:0.2px #2b2b2b;">Work Orders</div>
<svg class="r" style="left:29px;top:634.2px;" width="16" height="13" viewBox="0 0 16 13"><g fill="#2557e6"><rect x="0" y="0.5" width="2.2" height="2"/><rect x="0" y="5.5" width="2.2" height="2"/><rect x="0" y="10.5" width="2.2" height="2"/><rect x="4" y="0.5" width="12" height="2"/><rect x="4" y="5.5" width="12" height="2"/><rect x="4" y="10.5" width="12" height="2"/></g></svg>
<div class="t" style="left:64.50px;top:634px;font-size:13px;color:#2557e6;-webkit-text-stroke:0.2px #2557e6;">Trips</div>
<svg class="r" style="left:29px;top:674.2px;" width="16" height="13" viewBox="0 0 16 13"><g fill="#2b2b2b"><rect x="0" y="0.5" width="2.2" height="2"/><rect x="0" y="5.5" width="2.2" height="2"/><rect x="0" y="10.5" width="2.2" height="2"/><rect x="4" y="0.5" width="12" height="2"/><rect x="4" y="5.5" width="12" height="2"/><rect x="4" y="10.5" width="12" height="2"/></g></svg>
<div class="t" style="left:64.50px;top:674px;font-size:13px;color:#2b2b2b;-webkit-text-stroke:0.2px #2b2b2b;">Availability</div>
<svg class="r" style="left:29px;top:714.2px;" width="16" height="13" viewBox="0 0 16 13"><g fill="#2b2b2b"><rect x="0" y="0.5" width="2.2" height="2"/><rect x="0" y="5.5" width="2.2" height="2"/><rect x="0" y="10.5" width="2.2" height="2"/><rect x="4" y="0.5" width="12" height="2"/><rect x="4" y="5.5" width="12" height="2"/><rect x="4" y="10.5" width="12" height="2"/></g></svg>
<div class="t" style="left:64.50px;top:714px;font-size:13px;color:#2b2b2b;-webkit-text-stroke:0.2px #2b2b2b;">Dispatch</div>
<svg class="r" style="left:29px;top:754.0px;" width="16" height="13" viewBox="0 0 16 13"><g fill="#2b2b2b"><rect x="0" y="0.5" width="2.2" height="2"/><rect x="0" y="5.5" width="2.2" height="2"/><rect x="0" y="10.5" width="2.2" height="2"/><rect x="4" y="0.5" width="12" height="2"/><rect x="4" y="5.5" width="12" height="2"/><rect x="4" y="10.5" width="12" height="2"/></g></svg>
<div class="t" style="left:64.50px;top:754px;font-size:13px;color:#2b2b2b;-webkit-text-stroke:0.2px #2b2b2b;">Publish</div>
<svg class="r" style="left:29px;top:794.0px;" width="16" height="13" viewBox="0 0 16 13"><g fill="#2b2b2b"><rect x="0" y="0.5" width="2.2" height="2"/><rect x="0" y="5.5" width="2.2" height="2"/><rect x="0" y="10.5" width="2.2" height="2"/><rect x="4" y="0.5" width="12" height="2"/><rect x="4" y="5.5" width="12" height="2"/><rect x="4" y="10.5" width="12" height="2"/></g></svg>
<div class="t" style="left:64.50px;top:794px;font-size:13px;color:#2b2b2b;-webkit-text-stroke:0.2px #2b2b2b;">Confirmations</div>
<svg class="r" style="left:29px;top:834.1px;" width="16" height="13" viewBox="0 0 16 13"><g fill="#2b2b2b"><rect x="0" y="0.5" width="2.2" height="2"/><rect x="0" y="5.5" width="2.2" height="2"/><rect x="0" y="10.5" width="2.2" height="2"/><rect x="4" y="0.5" width="12" height="2"/><rect x="4" y="5.5" width="12" height="2"/><rect x="4" y="10.5" width="12" height="2"/></g></svg>
<div class="t" style="left:64.50px;top:834px;font-size:13px;color:#2b2b2b;-webkit-text-stroke:0.2px #2b2b2b;">Reports</div>
<svg class="r" style="left:171px;top:47px;" width="9" height="6" viewBox="0 0 9 6"><path d="M4.5 0L9 6H0z" fill="#d0d0d0"/></svg>
<div class="r" style="left:172px;top:58px;width:7px;height:575px;background:#cdcdcd;border-radius:4px"></div>
<svg class="r" style="left:171px;top:861px;" width="9" height="6" viewBox="0 0 9 6"><path d="M0 0h9L4.5 6z" fill="#d0d0d0"/></svg>
<div class="r" style="left:0px;top:870px;width:1919px;height:2px;background:#1e2129;"></div>
<div class="r" style="left:0px;top:0px;width:1919px;height:1px;background:#3a3a3a;"></div>
<div class="r" style="left:0px;top:1px;width:1919px;height:42px;background:#2557e6;box-shadow:0 1px 6px rgba(0,0,0,0.42)"></div>
<svg class="r" style="left:0px;top:0px;" width="40" height="42" viewBox="0 0 40 42"><ellipse cx="11.9" cy="21.2" rx="1.95" ry="1.60" fill="#fff"/><ellipse cx="16" cy="17.6" rx="1.95" ry="1.60" fill="#fff"/><ellipse cx="15.8" cy="24.9" rx="1.95" ry="1.60" fill="#fff"/><ellipse cx="20.4" cy="14.9" rx="1.60" ry="1.15" fill="#fff"/><ellipse cx="20" cy="20.8" rx="1.95" ry="1.60" fill="#fff"/><ellipse cx="20" cy="27.7" rx="1.95" ry="1.60" fill="#fff"/><ellipse cx="23.8" cy="12.8" rx="1.10" ry="0.95" fill="#fff"/><ellipse cx="23.8" cy="17.5" rx="1.60" ry="1.50" fill="#fff"/><ellipse cx="23.8" cy="23.7" rx="1.75" ry="1.60" fill="#fff"/><ellipse cx="24" cy="30.2" rx="1.75" ry="1.50" fill="#fff"/><ellipse cx="26.4" cy="11.5" rx="0.80" ry="0.70" fill="#fff"/><ellipse cx="26.9" cy="15.2" rx="1.10" ry="0.95" fill="#fff"/><ellipse cx="27.2" cy="20.5" rx="1.45" ry="1.50" fill="#fff"/><ellipse cx="27.2" cy="26.6" rx="1.45" ry="1.45" fill="#fff"/><ellipse cx="27.2" cy="31.8" rx="1.25" ry="1.10" fill="#fff"/><ellipse cx="29.1" cy="13.9" rx="0.80" ry="0.80" fill="#fff"/><ellipse cx="29.8" cy="18" rx="1.10" ry="1.10" fill="#fff"/><ellipse cx="29.9" cy="23.2" rx="1.10" ry="1.25" fill="#fff"/><ellipse cx="29.9" cy="28.5" rx="1.10" ry="1.25" fill="#fff"/><ellipse cx="31.5" cy="16" rx="0.65" ry="0.80" fill="#fff"/><ellipse cx="32" cy="20.7" rx="0.95" ry="0.80" fill="#fff"/><ellipse cx="32" cy="25.5" rx="0.80" ry="0.95" fill="#fff"/><ellipse cx="33.4" cy="18.4" rx="0.50" ry="0.65" fill="#fff"/><ellipse cx="34.4" cy="20.7" rx="0.45" ry="0.65" fill="#fff"/><ellipse cx="33.9" cy="23.1" rx="0.50" ry="0.80" fill="#fff"/></svg>
<div class="t" style="left:40.00px;top:19px;font-size:12.6px;color:#ffffff;-webkit-text-stroke:0.45px #ffffff;transform:scaleX(1.1371);transform-origin:0 0;">MOVEGISTICS</div>
<div class="t" style="left:140.50px;top:15px;font-size:7px;color:#ffffff;">®</div>
<div class="t" style="left:146.00px;top:22px;font-size:8.5px;color:#ffffff;font-weight:bold;transform:scaleX(1.0580);transform-origin:0 0;">5.0</div>
<svg class="r" style="left:172px;top:16px;" width="11" height="15" viewBox="0 0 11 15"><path d="M2 1.5l6 6-6 6" stroke="#fff" stroke-width="2.4" fill="none"/></svg>
<div class="t" style="left:191.50px;top:16px;font-size:15px;color:#ffffff;font-weight:bold;transform:scaleX(0.9242);transform-origin:0 0;">Operations</div>
<svg class="r" style="left:791px;top:15px;" width="13" height="13" viewBox="0 0 13 13"><path d="M6.5 0.5v12M0.5 6.5h12" stroke="#fff" stroke-width="2.2"/></svg>
<div class="r" style="left:830px;top:6px;width:291px;height:31px;background:rgba(255,255,255,0.2);border-radius:3px"></div>
<svg class="r" style="left:845.5px;top:10.5px;" width="21" height="21" viewBox="0 0 24 24"><path fill="#fff" stroke="#fff" stroke-width="0.6" d="M15.5 14h-.79l-.28-.27C15.41 12.59 16 11.11 16 9.5 16 5.91 13.09 3 9.5 3S3 5.91 3 9.5 5.91 16 9.5 16c1.61 0 3.09-.59 4.23-1.57l.27.28v.79l5 4.99L20.49 19l-4.99-5zm-6 0C7.01 14 5 11.99 5 9.5S7.01 5 9.5 5 14 7.01 14 9.5 11.99 14 9.5 14z"/></svg>
<div class="t" style="left:873.50px;top:14px;font-size:14.5px;color:rgba(255,255,255,0.5);font-weight:bold;transform:scaleX(0.8807);transform-origin:0 0;">Search...</div>
<svg class="r" style="left:1700px;top:11px;" width="22" height="22" viewBox="0 0 24 24"><path fill="#fff" d="M12 22c1.1 0 2-.9 2-2h-4c0 1.1.89 2 2 2zm6-6v-5c0-3.07-1.64-5.64-4.5-6.32V4c0-.83-.67-1.5-1.5-1.5s-1.5.67-1.5 1.5v.68C7.63 5.36 6 7.92 6 11v5l-2 2v1h16v-1l-2-2z"/></svg>
<div class="r" style="left:1708px;top:5px;width:20px;height:16px;background:#d34a55;border-radius:50%"></div>
<div class="t" style="left:1710.00px;top:10px;font-size:9px;color:#ffffff;font-weight:bold;transform:scaleX(1.0488);transform-origin:0 0;">99+</div>
<svg class="r" style="left:1745px;top:12px;" width="21" height="19" viewBox="0 0 21 19"><path fill="#fff" d="M0.5 0.5h19.5v13.5H9.5L4.5 18.5V14H0.5z"/><rect x="5.4" y="4.2" width="9.6" height="6" rx="1.2" fill="none" stroke="#6f8ff0" stroke-width="1.4"/><path d="M6.2 5.2l4 2.6 4-2.6" stroke="#6f8ff0" stroke-width="1.2" fill="none"/></svg>
<svg class="r" style="left:1789px;top:11px;" width="22" height="22" viewBox="0 0 24 24"><path fill="#fff" d="M19.14 12.94c.04-.3.06-.61.06-.94 0-.32-.02-.64-.07-.94l2.03-1.58c.18-.14.23-.41.12-.61l-1.92-3.32c-.12-.22-.37-.29-.59-.22l-2.39.96c-.5-.38-1.03-.7-1.62-.94l-.36-2.54c-.04-.24-.24-.41-.48-.41h-3.84c-.24 0-.43.17-.47.41l-.36 2.54c-.59.24-1.13.57-1.620.94l-2.39-.96c-.22-.08-.47 0-.59.22L2.74 8.87c-.12.21-.08.47.12.61l2.03 1.58c-.05.3-.09.63-.09.94s.02.64.07.94l-2.03 1.58c-.18.14-.23.41-.12.61l1.92 3.32c.12.22.37.29.59.22l2.39-.96c.5.38 1.03.7 1.62.94l.36 2.54c.05.24.24.41.48.41h3.84c.24 0 .44-.17.47-.41l.36-2.54c.59-.24 1.13-.56 1.62-.94l2.39.96c.22.08.47 0 .59-.22l1.92-3.32c.12-.22.07-.47-.12-.61l-2.01-1.58zM12 15.6c-1.98 0-3.6-1.62-3.6-3.6s1.62-3.6 3.6-3.6 3.6 1.62 3.6 3.6-1.62 3.6-3.6 3.6z"/></svg>
<svg class="r" style="left:1834px;top:11px;" width="22" height="22" viewBox="0 0 24 24"><path fill="#fff" d="M12 2C6.48 2 2 6.48 2 12s4.48 10 10 10 10-4.48 10-10S17.52 2 12 2zm0 4c1.93 0 3.5 1.57 3.5 3.5S13.93 13 12 13s-3.5-1.570-3.5-3.5S10.07 6 12 6zm0 14c-2.03 0-4.43-.82-6.14-2.88C7.55 15.8 9.68 15 12 15s4.45.8 6.14 2.12C16.43 19.18 14.03 20 12 20z"/></svg>
<svg class="r" style="left:1879px;top:11px;" width="22" height="22" viewBox="0 0 24 24"><path fill="#fff" d="M11 18h2v-2h-2v2zm1-16C6.48 2 2 6.48 2 12s4.48 10 10 10 10-4.48 10-10S17.52 2 12 2zm0 18c-4.41 0-8-3.59-8-8s3.59-8 8-8 8 3.59 8 8-3.59 8-8 8zm0-14c-2.21 0-4 1.79-4 4h2c0-1.1.9-2 2-2s2 .9 2 2c0 2-3 1.75-3 5h2c0-2.25 3-2.5 3-5 0-2.21-1.79-4-4-4z"/></svg>
</body></html>
